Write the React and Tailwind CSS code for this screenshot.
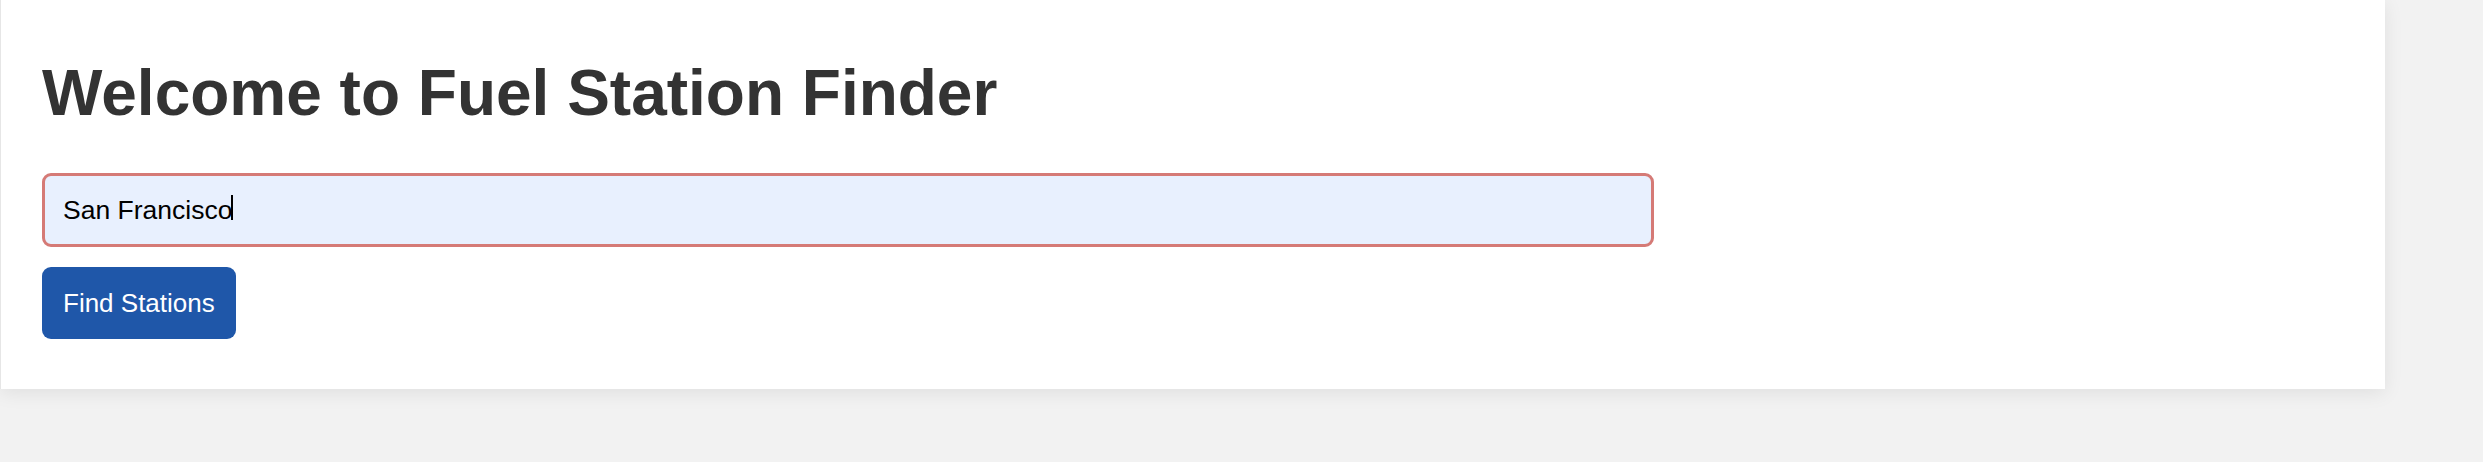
import React, { useState } from 'react';

export default function App() {
  const [city, setCity] = useState('San Francisco');

  return (
    <div className="min-h-[462px] bg-[#f2f2f2] font-['Liberation_Sans',Arial,sans-serif]">
      {/* Main card */}
      <div className="w-[2385px] bg-white border-l border-[#e6e6e6] shadow-[0_4px_18px_rgba(0,0,0,0.08)] px-[41px] pt-[56px] pb-[50px]">
        <h1 className="text-[64px] leading-[74px] font-bold text-[#333333]">
          Welcome to Fuel Station Finder
        </h1>

        <div className="relative mt-[43px] w-[1612px]">
          <input
            type="text"
            value={city}
            onChange={(e) => setCity(e.target.value)}
            className="block w-full h-[74px] px-[18px] text-[26.5px] text-black bg-[#e8f0fe] border-[3px] border-[#d57a76] rounded-[9px] outline-none"
          />
          {/* text caret */}
          <span className="absolute left-[189px] top-[22px] w-[2px] h-[25px] bg-black" />
        </div>

        <button className="mt-[20px] h-[72px] px-[21px] bg-[#1f57a9] text-white text-[26px] rounded-[9px]">
          Find Stations
        </button>
      </div>
    </div>
  );
}
